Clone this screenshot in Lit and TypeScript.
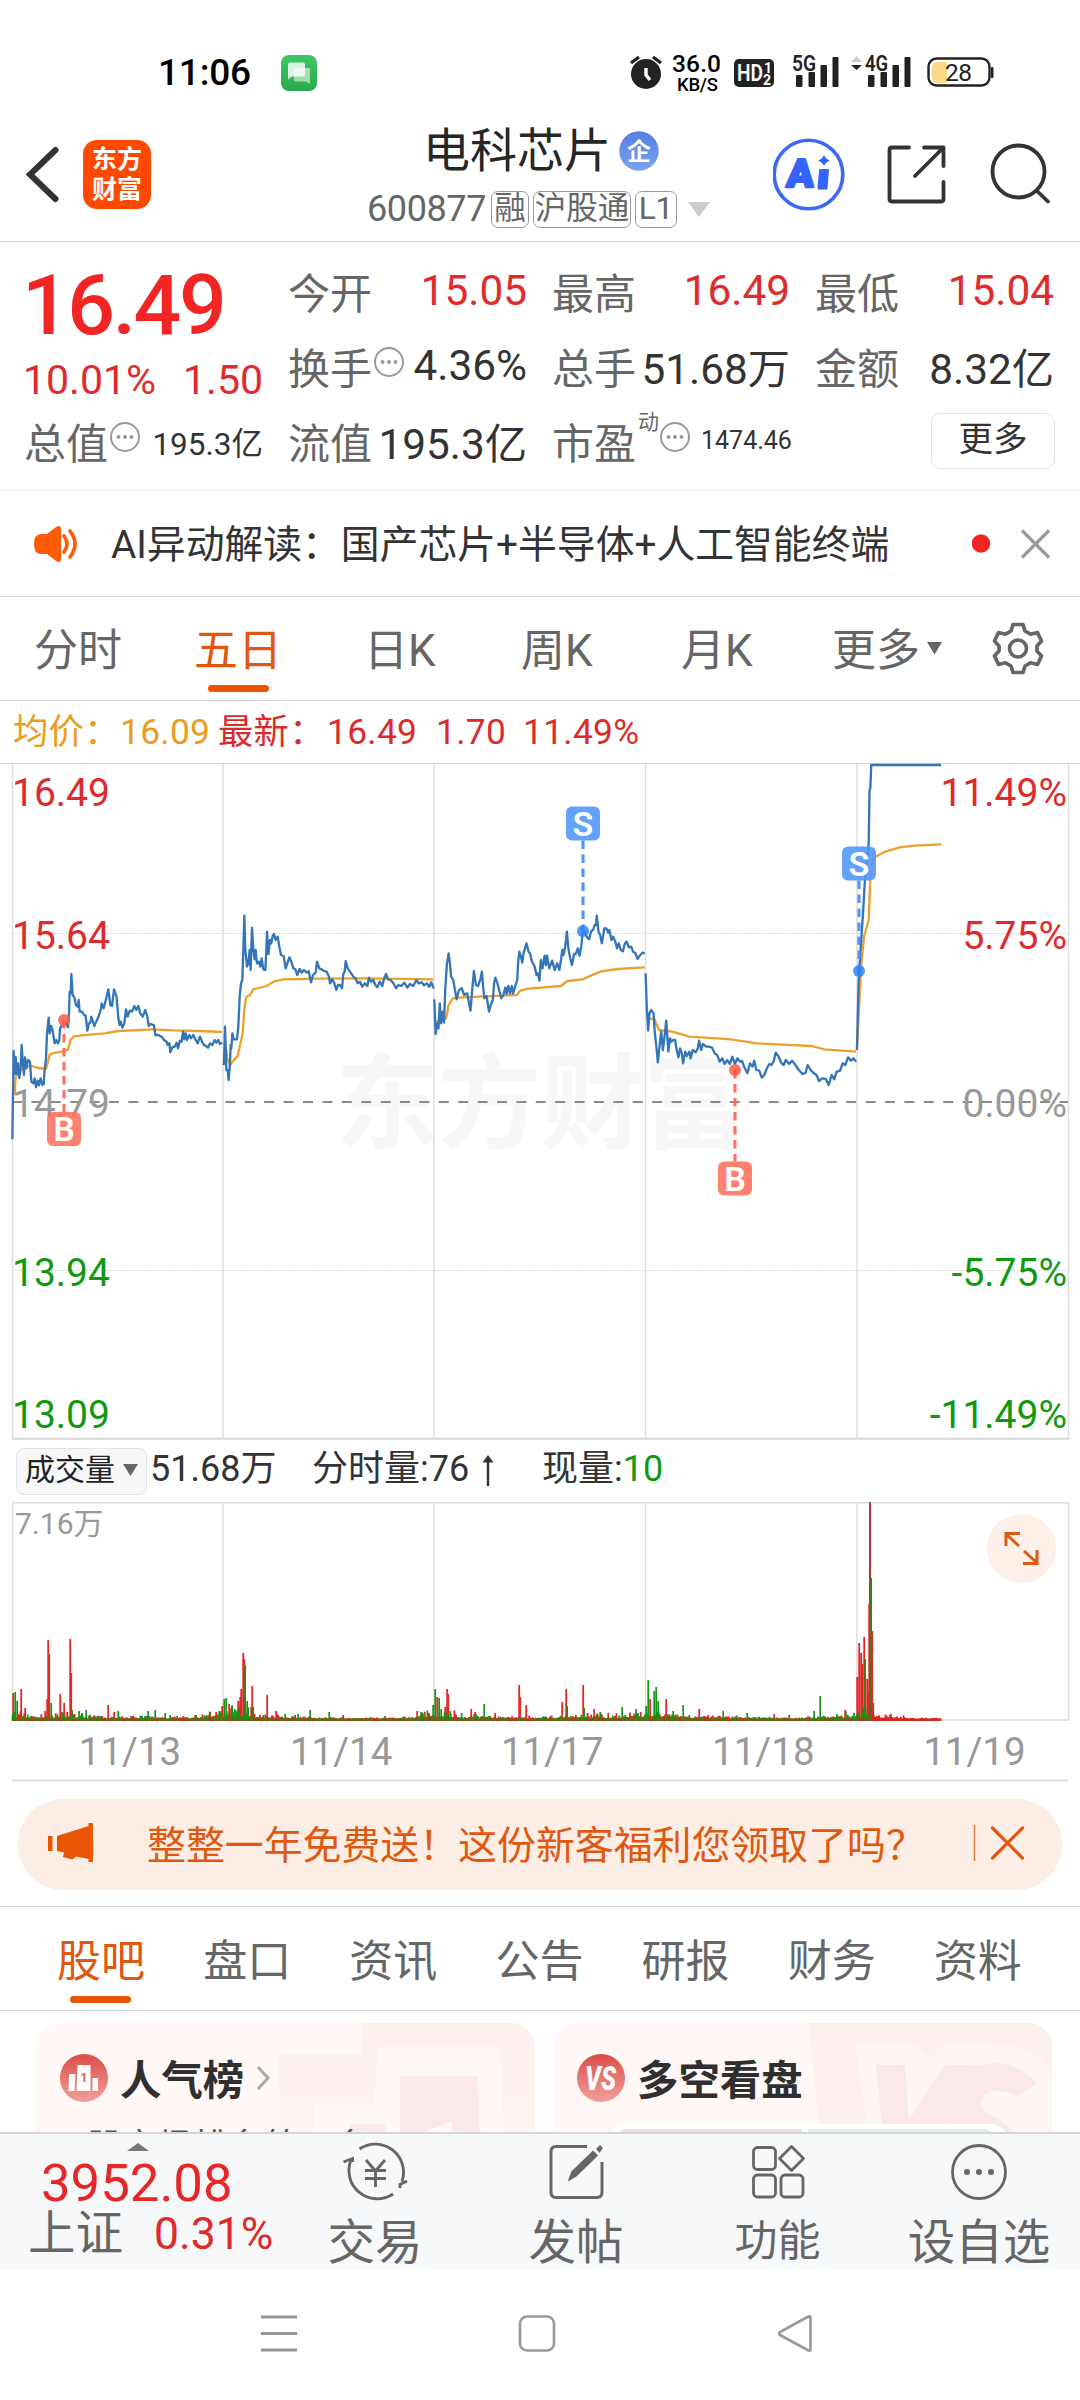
import { LitElement, html, svg, css } from "lit";
import { customElement } from "lit/decorators.js";

type Tone = "r" | "g";

/* Price traces, one per session, on the two drawing scales used by the plot. */
const PRICE_A = [
  "37,1168 38,1100 41,903 44,972 47,921 50,972 54,940 58,984 62,950 65,885 68,935 72,975 75,922 79,955 84,930 90,935 94,995 100,1000 104,985 108,1012 113,992 117,1006 122,985 127,1005 131,1003 134,960 138,925 141,850 146,803 149,850 153,828 157,838 160,855 164,880 169,870 174,880 178,870 180,835 187,825 192,812 198,820 204,832 207,790 209,725 212,730 214,672 218,735 223,742 228,765 233,770 236,750 239,785 246,785 252,795 257,797 262,842 267,820 271,818 274,800 278,812 283,828 290,812 295,802 302,780 305,760 311,775 317,752 325,718 331,765 336,768 342,718 347,732 350,742 355,805 359,825 362,815 367,833 373,820 378,778 383,800 389,782 396,785 403,768 409,780 415,768 421,790 428,800 436,780 442,800 446,828 452,822 462,826 466,855 475,855 485,860 492,870 500,875 503,885 508,880 511,907 517,892 524,890 530,878 534,895 540,872 545,875 549,845 553,868 557,850 561,870 568,855 573,865 580,855 586,868 593,880 600,860 606,875 612,885 618,888 624,893 630,880 637,885 644,870 649,878 655,870 660,882 666,878",
  "670,945 672,940 675,830 679,960 683,960 686,990 690,940 692,885 694,895 697,850 701,868 711,868 715,830 719,740 723,700 727,690 730,600 733,497 736,600 741,650 745,640 749,600 752,660 756,533 760,600 764,628 767,600 771,640 777,635 781,650 785,625 790,658 796,660 799,600 801,545 805,612 810,570 814,580 818,558 822,552 827,570 833,560 838,590 843,615 851,618 857,655 862,640 868,622 874,635 880,655 886,658 892,675 899,657 905,668 912,660 920,668 926,664 933,697 939,675 947,668 951,635 958,655 965,658 972,663 980,665 987,680 990,700 997,688 1003,700 1009,720 1014,705 1020,705 1026,715 1030,672 1034,665 1037,633 1043,655 1052,668 1060,680 1068,688 1073,700 1080,695 1087,710 1094,700 1102,708 1107,683 1113,695 1120,690 1126,705 1132,712 1139,695 1147,708 1151,690 1158,672 1164,688 1172,690 1180,700 1188,715 1195,705 1204,708 1213,698 1222,713 1230,702 1240,708 1249,690 1256,700 1265,697 1272,706 1280,700 1288,710 1294,697 1301,715",
];
const AVG_A = [
  "44,1035 47,980 60,965 75,950 95,948 115,954 138,957 144,935 148,915 156,910 190,904 205,898 211,870 220,860 245,856 315,850 355,843 460,838 520,841 600,843 666,846",
  "675,870 682,925 690,945 700,932 712,920 718,895 728,850 733,780 738,742 750,735 760,718 800,708 820,695 850,688 950,686 1100,685 1300,688",
];
const PRICE_B = [
  "34,748 37,852 41,820 44,835 47,760 50,820 54,785 57,818 60,720 64,640 68,610 71,640 74,680 79,690 83,720 87,748 92,722 99,714 105,735 112,730 120,782 124,720 128,663 133,705 138,708 144,685 147,665 150,710 153,745 158,738 164,785 168,765 173,750 176,700 179,683 184,700 188,720 193,745 198,735 203,712 206,732 210,708 214,730 218,708 221,730 226,710 231,690 233,640 236,605 240,620 243,638 246,610 253,580 258,605 262,612 266,635 272,648 277,675 280,670 284,692 287,630 291,655 296,617 299,645 302,617 307,655 314,632 320,660 326,640 331,660 335,630 338,600 341,615 345,590 349,545 353,600 357,625 361,645 366,612 370,612 375,595 379,617 383,590 386,550 391,545 396,560 402,568 406,545 411,540 415,525 418,525 420,497 424,545 428,555 432,580 438,535 443,535 447,548 450,540 455,570 459,560 464,575 468,595 472,580 477,600 482,604 487,580 491,575 496,592 502,590 506,605 511,608 517,627 523,615 529,608 534,610",
  "536,670 539,780 542,842 545,790 549,780 555,790 558,850 562,895 565,937 569,890 573,845 577,900 580,870 585,812 590,905 594,865 597,875 602,870 606,870 610,900 614,922 618,895 622,910 625,940 630,905 634,918 640,905 643,925 648,900 655,907 660,895 663,872 668,900 672,882 680,890 686,890 694,893 700,910 706,915 712,935 718,925 724,942 730,930 736,942 742,920 748,942 754,925 760,935 765,933 770,950 778,970 784,940 790,950 794,932 799,960 806,962 812,983 818,975 824,955 830,942 835,945 840,935 845,908 852,920 859,940 864,945 869,930 877,942 884,932 892,945 900,960 909,972 916,968 921,945 928,960 936,970 942,975 948,993 956,985 964,987 971,1005 978,975 984,988 990,965 998,962 1004,940 1010,945 1017,922 1024,932 1030,925 1036,935",
  "1038,900 1042,700 1046,610 1052,500 1057,390 1062,340 1066,280 1068,120 1070,115 1072,45 1238,45",
];
const AVG_B = [
  "38,815 62,805 68,765 78,745 100,742 230,735 238,722 258,716 335,708 350,693 387,688 400,680 430,664 470,657 534,652",
  "545,805 557,808 568,840 600,845 640,860 740,868 800,880 930,888 960,898 1036,905",
  "1038,900 1048,650 1055,560 1066,510 1070,380 1075,330 1085,318 1105,305 1140,292 1175,287 1238,283",
];

/* Volume peaks: x, height, tone. */
const PEAKS =
  "13 28 r,15 29 g,17 20 g,21 32 r,25 13 r,45 10 r,47 22 r,48 81 r,49 67 r,51 18 g,60 27 r,64 18 r,67 9 r,70 82 r,71 48 r,72 11 g,79 10 g,82 8 g,86 11 g,102 5 r,108 16 r,114 9 r,118 10 g,131 5 r,148 10 g,155 11 g,165 8 g,170 6 g,210 9 r,216 9 r,219 10 g,222 15 r,224 22 g,226 23 g,229 17 r,232 14 r,238 20 r,240 24 r,241 32 r,243 68 r,244 62 r,245 56 g,247 20 g,251 14 r,252 35 r,253 14 g,267 26 r,276 10 r,285 7 g,298 7 g,310 11 g,329 9 g,343 6 r,385 5 r,417 10 r,421 9 g,428 8 r,433 16 g,435 32 g,437 24 r,439 23 g,441 12 g,445 14 r,447 32 r,448 27 r,450 10 g,471 12 r,475 9 r,484 17 g,495 8 r,519 36 r,520 24 r,526 16 r,562 19 r,566 32 r,567 15 g,583 36 r,584 13 g,594 12 r,600 9 g,622 14 g,636 12 g,646 15 g,648 41 g,650 22 r,654 30 g,656 34 g,658 20 g,666 22 r,673 10 g,683 16 g,699 12 r,723 10 g,747 8 g,774 7 r,789 6 r,814 10 g,820 25 g,845 11 r,857 44 r,859 78 r,861 68 r,862 57 r,864 84 r,865 62 g,867 42 r,868 30 r,869 117 r,870 217 r,871 143 g,872 90 r,873 18 r";

/* Typical height of the small bars as the sessions go by: x, height. */
const ENVELOPE: [number, number][] = [
  [12, 14], [30, 7], [45, 7], [70, 9], [95, 5], [140, 5], [190, 4], [212, 10], [225, 15],
  [235, 19], [250, 15], [262, 8], [300, 5], [345, 2], [410, 4], [425, 11], [445, 16],
  [460, 8], [475, 9], [500, 4], [540, 4], [570, 6], [595, 9], [640, 9], [655, 19],
  [672, 11], [700, 5], [750, 5], [800, 2], [835, 8], [855, 12], [870, 22], [878, 9],
  [895, 6], [915, 2], [942, 2],
];

function envelopeAt(x: number): number {
  for (let i = 1; i < ENVELOPE.length; i++) {
    const [x0, h0] = ENVELOPE[i - 1];
    const [x1, h1] = ENVELOPE[i];
    if (x <= x1) return h0 + ((h1 - h0) * (x - x0)) / (x1 - x0);
  }
  return 2;
}

function volumePaths(): Record<Tone, string> {
  const out: Record<Tone, string> = { r: "", g: "" };
  let seed = 7;
  const rnd = () => (seed = (seed * 16807) % 2147483647) / 2147483647;
  for (let x = 12.5; x < 941; x += 0.9) {
    const tone: Tone = x > 872 || rnd() > 0.5 ? "r" : "g";
    const h = 2 + envelopeAt(x) * (0.1 + 0.75 * rnd() * rnd());
    out[tone] += `M${x.toFixed(1)} 219v-${h.toFixed(1)}`;
  }
  for (const p of PEAKS.split(",")) {
    const [x, h, t] = p.split(" ");
    out[t as Tone] += `M${+x + 0.2} 219v-${h}`;
  }
  return out;
}
const VOLUME = volumePaths();

const COLS = [12.5, 223, 434, 645.5, 857, 1068.5];

interface Mark { x: number; dot: number; box: number; kind: "B" | "S"; }
const MARKS: Mark[] = [
  { x: 64, dot: 1020, box: 1112, kind: "B" },
  { x: 583, dot: 931, box: 806.5, kind: "S" },
  { x: 859, dot: 971, box: 846.5, kind: "S" },
  { x: 735, dot: 1070, box: 1161.5, kind: "B" },
];

const more = () => html`<svg class="more" width="32" height="32" viewBox="0 0 32 32">
  <circle cx="16" cy="16" r="14" fill="none" stroke="#999" stroke-width="2"/>
  <g fill="#999"><circle cx="9.5" cy="16" r="2"/><circle cx="16" cy="16" r="2"/><circle cx="22.5" cy="16" r="2"/></g>
</svg>`;

@customElement("price-plot")
export class PricePlot extends LitElement {
  static styles = css`
    :host { display: block; }
    svg { display: block; }
    text { font-family: Roboto, "Noto Sans CJK SC", sans-serif; }
    .axis { font-size: 39px; }
    .up { fill: #de2a2a; }
    .flat { fill: #999; }
    .down { fill: #0f990f; }
    .price { fill: none; stroke: #3474b9; stroke-width: 2.3; stroke-linejoin: round; }
    .avg { fill: none; stroke: #eda02c; stroke-width: 2.3; stroke-linejoin: round; }
    .price polyline, .avg polyline { vector-effect: non-scaling-stroke; }
    .water { font-family: "Noto Sans CJK SC", sans-serif; font-weight: 700; font-size: 104px; fill: #f7f7f7; }
    .tag { font-size: 34px; font-weight: 600; fill: #fff; }
  `;

  private mark(m: Mark) {
    const buy = m.kind === "B";
    const tone = buy ? "#ff6f5c" : "#4d95fb";
    const from = buy ? m.dot : m.box + 34;
    const to = buy ? m.box : m.dot;
    return svg`<g>
      <line x1=${m.x} x2=${m.x} y1=${from} y2=${to} stroke=${tone} stroke-width="3.1" stroke-dasharray="8.5 5.5"/>
      <circle cx=${m.x} cy=${m.dot} r="6" fill=${buy ? "#ff5a48" : "#2d83fa"} opacity=".85"/>
      <rect x=${m.x - 17} y=${m.box} width="34" height="34" rx="6" fill=${tone} opacity=".88"/>
      <text class="tag" x=${m.x} y=${m.box + 29} text-anchor="middle">${m.kind}</text>
    </g>`;
  }

  render() {
    const left: [string, number, string][] = [
      ["16.49", 806, "up"], ["15.64", 949, "up"], ["14.79", 1117, "flat"], ["13.94", 1286, "down"], ["13.09", 1428, "down"],
    ];
    const right: [string, number, string][] = [
      ["11.49%", 806, "up"], ["5.75%", 949, "up"], ["0.00%", 1117, "flat"], ["-5.75%", 1286, "down"], ["-11.49%", 1428, "down"],
    ];
    const lines = (list: string[]) => list.map((p) => svg`<polyline points=${p}/>`);
    return html`<svg width="1080" height="677" viewBox="0 763 1080 677">
      <text class="water" x="335" y="1141" textLength="412">东方财富</text>
      <path d="M0 763.5H1080" stroke="#d6d6d6"/>
      <path d="M12 933.5H1068M12 1270.5H1068" stroke="#cfcfcf" stroke-dasharray="1.5 1.5"/>
      <path d="M12 1438.7H1069" stroke="#d8d8d8" stroke-width="2"/>
      ${COLS.map((x) => svg`<path d="M${x} 764V1438" stroke="#dcdcdc" stroke-width="1.4"/>`)}
      <path d="M12 1102H1068" stroke="#8a8a8a" stroke-width="2" stroke-dasharray="10 9.4"/>
      ${left.map(([t, y, c]) => svg`<text class="axis ${c}" x="12" y=${y}>${t}</text>`)}
      ${right.map(([t, y, c]) => svg`<text class="axis ${c}" x="1067" y=${y} text-anchor="end">${t}</text>`)}
      <g transform="translate(0 750) scale(.33333)">
        <g class="avg">${lines(AVG_A)}</g><g class="price">${lines(PRICE_A)}</g>
      </g>
      <g transform="translate(420 750) scale(.42092 .33333)">
        <g class="avg">${lines(AVG_B)}</g><g class="price">${lines(PRICE_B)}</g>
      </g>
      ${MARKS.map((m) => this.mark(m))}
    </svg>`;
  }
}

@customElement("volume-plot")
export class VolumePlot extends LitElement {
  static styles = css`
    :host { display: block; }
    svg { display: block; }
    text { font-family: Roboto, "Noto Sans CJK SC", sans-serif; fill: #999; }
    .cap { font-size: 30px; }
    .day { font-size: 38.5px; }
  `;
  render() {
    const days = ["11/13", "11/14", "11/17", "11/18", "11/19"];
    return html`<svg width="1080" height="280" viewBox="0 0 1080 280">
      <path d="M12 .7H1069M12 218H1069" stroke="#dcdcdc" stroke-width="1.4"/>
      ${COLS.map((x) => svg`<path d="M${x} 0V218" stroke="#dcdcdc" stroke-width="1.4"/>`)}
      <path d=${VOLUME.r} stroke="#e82424" stroke-width="1.8"/>
      <path d=${VOLUME.g} stroke="#149314" stroke-width="1.7"/>
      <path d="M12 217.8H858" stroke="#8c5218" stroke-width="2"/>
      <path d="M858 217.8H941" stroke="#c03020" stroke-width="2"/>
      <path d="M870 219V0" stroke="#b03a34" stroke-width="1.9"/>
      <path d="M871.2 219V76" stroke="#149314" stroke-width="1.6"/>
      <text class="cap" x="15" y="31.5">7.16万</text>
      <circle cx="1021.5" cy="46.5" r="34.5" fill="#fef0e9"/>
      <g fill="none" stroke="#dd5a12" stroke-width="3">
        <path d="M1006 44V31.5H1020M1007 33L1019 44M1037 48V61.5H1023M1036 60L1024 49"/>
      </g>
      ${days.map((d, i) => svg`<text class="day" x=${130 + i * 211.1} y="263" text-anchor="middle">${d}</text>`)}
      <path d="M12 278.5H1068" stroke="#e2e2e2" stroke-width="2"/>
    </svg>`;
  }
}

@customElement("app-root")
export class AppRoot extends LitElement {
  static styles = css`
    :host {
      display: block; width: 1080px; height: 2400px; overflow: hidden; background: #fff; color: #333;
      font-family: Roboto, "Noto Sans CJK SC", sans-serif;
    }
    * { box-sizing: border-box; }
    svg { display: block; flex: none; }
    svg text { font-family: Roboto, "Noto Sans CJK SC", sans-serif; }
    .row { display: flex; align-items: center; white-space: nowrap; }
    .status { height: 95px; padding: 50px 0 0 158px; align-items: flex-start; }
    .clock { font-size: 37px; line-height: 46px; font-weight: 500; color: #000; width: 123px; letter-spacing: -.2px; }
    .chat { margin: 5px 308px 0 0; }
    .head { display: flex; height: 147px; border-bottom: 1.5px solid #d8d8d8; }
    .head-l { display: flex; width: 368px; padding: 45px 0 0 24px; }
    .logo { width: 68px; height: 69px; border-radius: 14px; background: #ff4800; margin-left: 22px; color: #fff;
      font: 700 25px/30px "Noto Sans CJK SC", sans-serif; text-align: center; padding-top: 2px; }
    .head-c { width: 405px; padding-top: 25px; }
    .name { height: 62px; padding-left: 55px; font-size: 47px; line-height: 62px; color: #262626; }
    .corp { margin: 0 0 1px 8px; }
    .code { height: 42px; margin-top: 6px; font-size: 36px; color: #666; }
    .code b { font-weight: 400; width: 124px; letter-spacing: -.4px; margin-left: -1px; }
    .chip { height: 37px; border: 1.6px solid #999; border-radius: 7px; font-size: 31.5px; line-height: 33px; text-align: center; margin-right: 4px; }
    .c1 { width: 38px; } .c3 { width: 98px; } .c2 { width: 42px; }
    .caret { margin-left: 7px; }
    .head-r { display: flex; padding-top: 41px; }
    .quote { display: grid; grid-template-columns: 239px 239px 238px 239px; column-gap: 25px; padding: 11px 24px 0; height: 249px; border-bottom: 1.5px solid #ececec; }
    .cell { display: flex; align-items: center; height: 75px; justify-content: space-between; font-size: 42.3px; white-space: nowrap; }
    .cell span { font-size: 42px; color: #666; display: flex; align-items: center; }
    .more { margin: -8px 0 0 1px; }
    .sup { font-style: normal; font-size: 21px; color: #666; line-height: 21px; align-self: flex-start; margin: 2px -1px 0 2px; }
    .red { color: #e02b2b; }
    .price { height: 100px; line-height: 106px; font-size: 84px; font-weight: 500; color: #f22424; margin-left: -2px; letter-spacing: -2.4px; }
    .chg { display: flex; justify-content: space-between; height: 50px; line-height: 54px; font-size: 41px; color: #de2c2c; margin-left: -1px; }
    .s31 { font-size: 31.5px; } .s25 { font-size: 25px; }
    .cell.pe { justify-content: flex-start; } .pe .s25 { margin-left: 10px; }
    .btn { width: 124px; height: 56px; border: 1.6px solid #e4e4e4; border-radius: 9px; font-size: 34.5px; line-height: 50px; text-align: center; margin: 10px -1px 0 auto; }
    .ai { height: 106px; border-bottom: 1.5px solid #d8d8d8; padding-left: 33px; font-size: 38.8px; }
    .ai p { margin: -5px 0 0 32px; width: 861px; }
    .tabs { height: 104px; border-bottom: 1.5px solid #d6d6d6; font-size: 44px; color: #666; padding-left: 34px; }
    .tabs div { line-height: 108px; height: 104px; }
    .on { color: #e0570f; position: relative; }
    .on::after { content: ""; position: absolute; left: 50%; margin-left: -30px; bottom: 9px; width: 61px; height: 7px; border-radius: 4px; background: #ea5504; }
    .t1 { width: 160px; } .t2 { width: 88px; margin-right: 82px; } .t3 { width: 157px; } .t4 { width: 160px; } .t5 { width: 151px; } .t6 { width: 95px; }
    .gear { margin: -1px 0 0 50px; }
    .legend { height: 62px; padding: 0 0 0 13px; font-size: 35.3px; color: #dc2a2a; letter-spacing: .3px; }
    .legend div { line-height: 64px; }
    .gold { color: #eb9c1c; } .l1 { width: 107px; } .l2 { width: 98px; } .l3 { width: 109px; } .l4 { width: 109px; } .l5 { width: 87px; }
    .volhead { height: 62px; padding: 0 0 0 16px; font-size: 36px; }
    .volhead div { line-height: 40px; }
    .volhead > div:not(.pick) { margin-top: -4px; }
    .pick { width: 131px; height: 47px; background: #f7f8fa; border: 1.5px solid #e3e4e8; border-radius: 8px; font-size: 30px; padding: 0 0 3px 8px; gap: 8px; color: #222; }
    .v1 { width: 165px; padding-left: 3px; } .v2 { width: 164px; } .arrow { margin: 0 48px 0 6px; } .green { color: #0f990f; }
    .promo { margin: 17px 18px 16px; height: 91px; border-radius: 46px; background: #fceee5; padding-left: 29px; color: #e0570f; font-size: 38.9px; }
    .promo p { margin: -5px 0 0 53px; width: 826px; }
    .promo svg { margin-top: -3px; }
    .sections { height: 105px; border-top: 1.5px solid #d6d6d6; border-bottom: 1.5px solid #d6d6d6; padding-left: 57px; font-size: 44px; color: #666; }
    .sections div { width: 146.3px; line-height: 108px; height: 102px; }
    .sections .on::after { left: 13px; margin: 0; bottom: 7px; }
    .cards { display: grid; grid-template-columns: 499px 499px; column-gap: 18px; padding: 12px 0 0 36px; height: 121px; overflow: hidden; }
    .card { position: relative; height: 160px; border-radius: 24px; background: #fff8f6; overflow: hidden; padding: 26px 0 0 23px; }
    .art { position: absolute; left: 0; top: 0; }
    .card .row { position: relative; font: 700 41.4px/52px "Noto Sans CJK SC", sans-serif; gap: 11px; color: #2f2f2f; height: 56px; padding-bottom: 1px; }
    .card .row svg { margin-top: 2px; }
    .card .sub { position: relative; margin: 17px 0 0 28px; font-size: 35.5px; line-height: 50px; color: #555; white-space: pre; }
    .dock { height: 137px; background: #f7f8fa; border-top: 2px solid #d2d6da; display: grid; grid-template-columns: 275px 201px 201px 202px 201px; color: #666; font-size: 47.5px; }
    .idx { padding: 9px 0 0 28px; }
    .idx .tri { margin-left: 99px; }
    .pts { font-size: 52.7px; line-height: 56px; color: #e52727; padding-left: 13px; margin-top: 4px; }
    .idx .row { font-size: 47.5px; line-height: 50px; margin-top: -2px; }
    .idx .row b { font-weight: 400; font-size: 44.5px; color: #de2a2a; margin-left: 31px; }
    .act { display: flex; flex-direction: column; align-items: center; padding-top: 8px; margin-left: -1px; }
    .act div { line-height: 60px; margin-top: 11px; }
    .act .sm { font-size: 43px; margin-top: 9px; }
    .nav { height: 131px; padding: 0 0 3px 259px; }
    .nav svg + svg { margin-left: 218px; }
  `;

  private header() {
    return html`
    <div class="status row">
      <div class="clock">11:06</div>
      <svg class="chat" width="36" height="36" viewBox="0 0 36 36">
        <defs><linearGradient id="cg" x2="0" y2="1"><stop stop-color="#3fc765"/><stop offset="1" stop-color="#2aa94b"/></linearGradient></defs>
        <rect width="36" height="36" rx="8" fill="url(#cg)"/>
        <path d="M13 13h15q1 0 1 1v15l-4-2.5H15q-2 0-2-2z" fill="#fff" opacity=".55"/>
        <path d="M9 7.500h13q2 0 2 2v10q0 2-2 2H11l-4 3v-15q0-2 2-2z" fill="#fff" opacity=".82"/>
      </svg>
      <svg width="366" height="44" viewBox="625 50 366 44">
        <g fill="#222">
          <circle cx="646" cy="74" r="15"/><path d="M631 63l8-6M661 63l-8-6" stroke="#222" stroke-width="3.400"/>
          <path d="M646 68v7l4 5" stroke="#fff" stroke-width="3.400" fill="none"/>
          <rect x="734" y="59" width="40" height="28" rx="5"/>
          <rect x="796" y="75" width="6.500" height="12" rx="1"/><rect x="808.500" y="72" width="6.500" height="15" rx="1"/><rect x="820.500" y="65" width="6.500" height="22" rx="1"/><rect x="832.500" y="57" width="6" height="30" rx="1"/>
          <rect x="868" y="75" width="6.500" height="12" rx="1"/><rect x="880.500" y="72" width="6.500" height="15" rx="1"/><rect x="892.500" y="65" width="6.500" height="22" rx="1"/><rect x="904.500" y="57" width="6" height="30" rx="1"/>
          <path d="M851 65h11l-5.500 5z"/><path d="M851 62h11l-5.500-6z" fill="#ccc"/>
        </g>
        <text x="672" y="72" font-size="24.500" font-weight="500" fill="#000" textLength="49">36.0</text>
        <text x="677" y="90.500" font-size="18.500" font-weight="500" fill="#000" textLength="41">KB/S</text>
        <text x="737" y="81" font-size="23" font-weight="600" fill="#fff" textLength="26" lengthAdjust="spacingAndGlyphs">HD</text>
        <text x="764" y="73" font-size="14" font-weight="700" fill="#fff">1</text><text x="763" y="84.500" font-size="14" font-weight="700" fill="#fff">2</text>
        <text x="792" y="70.500" font-size="21.500" font-weight="600" fill="#222" textLength="24" lengthAdjust="spacingAndGlyphs">5G</text>
        <text x="865" y="70.500" font-size="21.500" font-weight="600" fill="#222" textLength="23" lengthAdjust="spacingAndGlyphs">4G</text>
        <path d="M938 62h9v21h-9q-6 0-6-6v-9q0-6 6-6z" fill="#fdd98a"/>
        <rect x="928.500" y="58.500" width="61" height="27" rx="8" fill="none" stroke="#222" stroke-width="2.400"/>
        <text x="945" y="81" font-size="24.500" fill="#222" textLength="27">28</text>
      </svg>
      <svg width="4" height="12" style="margin-top:17px"><rect width="2.500" height="11" rx="1" fill="#222"/></svg>
    </div>
    <div class="head">
      <div class="head-l">
        <svg width="37" height="68" viewBox="24 140 37 68"><path d="M55.500 150L30 174.500L55.500 199" fill="none" stroke="#333" stroke-width="6" stroke-linecap="round"/></svg>
        <div class="logo">东方<br>财富</div>
      </div>
      <div class="head-c">
        <div class="name row">电科芯片
          <svg class="corp" width="40" height="40" viewBox="0 0 40 40"><defs><linearGradient id="qg" x2="0" y2="1"><stop stop-color="#557fe6"/><stop offset="1" stop-color="#7ba4ec"/></linearGradient></defs>
            <circle cx="20" cy="20" r="19.700" fill="url(#qg)"/><text x="20" y="29" font-size="24" font-weight="700" fill="#fff" text-anchor="middle">企</text></svg>
        </div>
        <div class="code row"><b>600877</b><div class="chip c1">融</div><div class="chip c3">沪股通</div><div class="chip c2">L1</div>
          <svg class="caret" width="22" height="15"><path d="M0 0h22L11 15z" fill="#ccc"/></svg></div>
      </div>
      <div class="head-r">
        <svg width="307" height="76" viewBox="773 136 307 76">
          <circle cx="808.500" cy="174.500" r="34.300" fill="none" stroke="#3c68f3" stroke-width="3.600"/>
          <g font-weight="900" fill="#3563fb" stroke="#3563fb"><text x="786" y="187" font-size="39" stroke-width="2.500" stroke-linejoin="round" textLength="27" lengthAdjust="spacingAndGlyphs" transform="skewX(-4) translate(13 0)">A</text></g>
          <path d="M820 169h8q1 0 1 1l-1.500 18q0 1.500-1.500 1.500h-7q-1.500 0-1.500-1.500l1.500-17.500q0-1.500 1-1.500zM824 155q1.500 4 6 5.500q-4.500 1.500-6 5.500q-1.500-4-6-5.500q4.500-1.500 6-5.500z" fill="#3563fb"/>
          <g fill="none" stroke="#333" stroke-width="3.800" stroke-linecap="round" stroke-linejoin="round">
            <path d="M909 147.500H892q-2.500 0-2.500 2.500V199q0 2.500 2.500 2.500H941q2.500 0 2.500-2.500V182M924 147.500H943.500V166M942 149L915 176"/>
            <ellipse cx="1018.500" cy="171.500" rx="26" ry="26"/><path d="M1037 191L1048 201.500"/>
          </g>
        </svg>
      </div>
    </div>`;
  }

  private quote() {
    return html`
    <div class="quote">
      <div><div class="price">16.49</div><div class="chg"><div>10.01%</div><div>1.50</div></div>
        <div class="cell"><span>总值${more()}</span><div class="s31">195.3亿</div></div></div>
      <div><div class="cell"><span>今开</span><div class="red">15.05</div></div>
        <div class="cell"><span>换手${more()}</span><div>4.36%</div></div>
        <div class="cell"><span>流值</span><div>195.3亿</div></div></div>
      <div><div class="cell"><span>最高</span><div class="red">16.49</div></div>
        <div class="cell"><span>总手</span><div>51.68万</div></div>
        <div class="cell pe"><span>市盈<i class="sup">动</i>${more()}</span><div class="s25">1474.46</div></div></div>
      <div><div class="cell"><span>最低</span><div class="red">15.04</div></div>
        <div class="cell"><span>金额</span><div>8.32亿</div></div>
        <div class="btn">更多</div></div>
    </div>
    <div class="ai row">
      <svg width="46" height="38" viewBox="33 525 46 38">
        <path d="M41 534h6l9-7q5-2.500 5 2v30q0 4.500-5 2l-9-7h-6q-7 0-7-10t7-10z" fill="#ff5a05"/>
        <path d="M64 536q6 8 0 16M70 531q10 13 0 26" fill="none" stroke="#ff5a05" stroke-width="3.600" stroke-linecap="round"/>
      </svg>
      <p>AI异动解读：国产芯片+半导体+人工智能终端</p>
      <svg width="90" height="32" viewBox="970 528 90 32"><circle cx="979" cy="543.500" r="9.300" fill="#f22424"/>
        <path d="M1020 530.500L1047 557.500M1047 530.500L1020 557.500" stroke="#999" stroke-width="3.200"/></svg>
    </div>`;
  }

  private chart() {
    return html`
    <div class="tabs row">
      <div class="t1">分时</div><div class="t2 on">五日</div><div class="t3">日K</div><div class="t4">周K</div><div class="t5">月K</div><div class="t6">更多</div>
      <svg width="15" height="13"><path d="M0 0h15L7.500 12.500z" fill="#666"/></svg>
      <svg class="gear" width="52" height="54" viewBox="0 0 52 54" fill="none" stroke="#666" stroke-width="3.700" stroke-linejoin="round">
        <path d="M21 3.500h10l2 6.500l5.500 3.200l7-1.700l4 8.500l-4.500 5v5l4.500 5l-4 8.500l-7-1.700l-5.500 3.200l-2 6.500h-10l-2-6.500l-5.500-3.200l-7 1.700l-4-8.500l4.500-5v-5l-4.500-5l4-8.500l7 1.700l5.500-3.200z"/>
        <circle cx="26" cy="27.500" r="8.500"/>
      </svg>
    </div>
    <div class="legend row"><div class="gold l1">均价：</div><div class="gold l2">16.09</div><div class="l3">最新：</div><div class="l4">16.49</div><div class="l5">1.70</div><div>11.49%</div></div>
    <price-plot></price-plot>
    <div class="volhead row">
      <div class="pick row">成交量<svg width="15" height="12"><path d="M0 0h15L7.500 12z" fill="#666"/></svg></div>
      <div class="v1">51.68万</div><div class="v2">分时量:76</div>
      <svg class="arrow" width="12" height="32"><path d="M6 31V3" stroke="#333" stroke-width="2.500"/><path d="M0.500 7.500L6 0l5.500 7.500z" fill="#333"/></svg>
      <div>现量:<span class="green">10</span></div>
    </div>
    <volume-plot></volume-plot>
    <div class="promo row">
      <svg width="47" height="40" viewBox="47 1824 47 40" fill="#ea5504"><path d="M48 1837h4.500v15H48zM57 1837L88.500 1827V1824H93V1863H88.500V1860L76 1857.500L72.500 1860.500L63 1858L64 1853.500L57 1852z"/></svg>
      <p>整整一年免费送！这份新客福利您领取了吗？</p>
      <svg width="54" height="38" viewBox="973 1825 54 38"><path d="M974.500 1826V1862" stroke="#dd7a45" stroke-width="1.500"/><path d="M992.500 1829L1022.500 1859M1022.500 1829L992.500 1859" stroke="#e0570f" stroke-width="3.200" stroke-linecap="round"/></svg>
    </div>`;
  }

  private cards() {
    return html`
    <div class="sections row"><div class="on">股吧</div><div>盘口</div><div>资讯</div><div>公告</div><div>研报</div><div>财务</div><div>资料</div></div>
    <div class="cards">
      <div class="card">
        <svg class="art" width="499" height="160" viewBox="36 2023 499 160">
          <defs><linearGradient id="w1" x2="0" y2="1"><stop stop-color="#fdf1ef"/><stop offset="1" stop-color="#fef5f3"/></linearGradient></defs>
          <path d="M363 2023H535V2183H506L500 2047H378L374 2105H314V2183H279V2054H361z" fill="url(#w1)"/>
          <path d="M400 2076H477L482 2183H400z" fill="#fbe9e9"/><path d="M350 2124H385V2183H350z" fill="#fbe9e9"/>
          <path d="M420 2134L452 2121V2183H420z" fill="#fff8f6"/>
        </svg>
        <div class="row">
          <svg width="50" height="50" viewBox="0 0 50 50"><defs><linearGradient id="rg" x2="0" y2="1"><stop stop-color="#dc4c48"/><stop offset="1" stop-color="#f0a09c"/></linearGradient></defs>
            <circle cx="25" cy="25" r="24" fill="url(#rg)"/><path d="M10 21h6.500l-1 17H9.500zM18.500 12h13v26h-14zM33.500 25h5.500v13h-5.500z" fill="#fff"/>
            <text x="25" y="29" font-size="13" font-weight="700" fill="#df5f5b" text-anchor="middle">1</text></svg>
          人气榜<svg width="16" height="26"><path d="M3 2l10 11L3 24" fill="none" stroke="#aaa" stroke-width="3"/></svg>
        </div>
        <div class="sub">股市场排名第    名</div>
      </div>
      <div class="card">
        <svg class="art" width="499" height="160" viewBox="553 2023 499 160">
          <path d="M809 2023H1052V2183H825z" fill="#fdf0ee"/>
          <path d="M855 2044H915L930 2058L945 2044H990Q1060 2046 1052 2100V2183H875z" fill="#fef6f4"/>
          <path d="M876 2065H905L909 2120L945 2065H975L922 2183H888z" fill="#fbe9e9"/>
          <path d="M1037 2083Q1012 2056 975 2066Q945 2076 944 2104Q944 2124 963 2134V2183H1035Q1030 2135 990 2115Q975 2105 985 2094Q1000 2086 1017 2097z" fill="#fbe9e9"/>
          <rect x="606" y="2124" width="404" height="40" rx="20" fill="#fff"/>
          <path d="M624 2129H802V2160H612Q612 2134 624 2129z" fill="#f8dcd9"/><path d="M808 2129H985Q1003 2134 1003 2160H808z" fill="#d9eedd"/>
        </svg>
        <div class="row">
          <svg width="50" height="50" viewBox="0 0 50 50"><defs><linearGradient id="rh" x2="0" y2="1"><stop stop-color="#dc4c48"/><stop offset="1" stop-color="#f0a09c"/></linearGradient></defs>
            <circle cx="25" cy="25" r="24" fill="url(#rh)"/><text x="24.500" y="37" font-size="33" font-weight="900" font-style="italic" fill="#fff" text-anchor="middle" textLength="31" lengthAdjust="spacingAndGlyphs">VS</text></svg>
          多空看盘
        </div>
      </div>
    </div>`;
  }

  private dock() {
    return html`
    <div class="dock">
      <div class="idx"><svg class="tri" width="22" height="8"><path d="M0 8h22L11 0z" fill="#777"/></svg>
        <div class="pts">3952.08</div><div class="row">上证<b>0.31%</b></div></div>
      <div class="act"><svg width="68" height="60" viewBox="341 2142 68 60" fill="none" stroke="#666" stroke-width="2.900">
          <path d="M359.500 2149A28.200 28.200 0 0 1 402 2181.500M393 2194A28.200 28.200 0 0 1 351.500 2159"/>
          <path d="M400 2188V2184.500L407 2181M352.500 2162V2158.500L343.500 2162"/>
          <path d="M366 2160L375.500 2171L385 2160M375.500 2171V2187M365 2170.500H386M365 2178.500H386"/>
        </svg><div>交易</div></div>
      <div class="act"><svg width="58" height="60" viewBox="548 2142 58 60" fill="none" stroke="#666" stroke-width="3">
          <path d="M588 2146.500H557Q552 2146.500 552 2152V2192Q552 2197.500 557 2197.500H598Q603 2197.500 603 2192V2162"/>
          <path d="M570 2180L573 2172L594 2151.500L598 2155.500L577 2176z" fill="#666" stroke-width="1.500"/><path d="M597 2149L601 2145L604 2148L600.500 2153z" fill="#666" stroke="none"/>
        </svg><div>发帖</div></div>
      <div class="act"><svg width="58" height="60" viewBox="749 2142 58 60" fill="none" stroke="#666" stroke-width="2.800" stroke-linejoin="round">
          <rect x="753.500" y="2147.500" width="22" height="22" rx="4"/><rect x="753.500" y="2175" width="22" height="22" rx="4"/><rect x="781" y="2175" width="22" height="22" rx="4"/>
          <path d="M791.500 2146.500L803.500 2158.500L791.500 2170.500L779.500 2158.500z"/>
        </svg><div class="sm">功能</div></div>
      <div class="act"><svg width="60" height="60" viewBox="0 0 60 60"><circle cx="30" cy="30" r="26.500" fill="none" stroke="#666" stroke-width="2.800"/>
          <g fill="#666"><circle cx="18" cy="30" r="3"/><circle cx="30" cy="30" r="3"/><circle cx="42" cy="30" r="3"/></g></svg><div>设自选</div></div>
    </div>
    <div class="nav row">
      <svg width="40" height="40" viewBox="0 0 40 40"><path d="M2 4h36M2 20.500h36M2 37h36" stroke="#959595" stroke-width="2.800"/></svg>
      <svg width="40" height="40" viewBox="0 0 40 40"><rect x="3" y="3.500" width="34" height="34" rx="7" fill="none" stroke="#999" stroke-width="2.600"/></svg>
      <svg width="40" height="40" viewBox="0 0 40 40"><path d="M35.500 4.500v32q0 1.500-2 1L5 22q-1.500-1.500 0-3L33.500 3.500q2-.5 2 1z" fill="none" stroke="#999" stroke-width="2.600" stroke-linejoin="round"/></svg>
    </div>`;
  }

  render() {
    return html`${this.header()}${this.quote()}${this.chart()}${this.cards()}${this.dock()}`;
  }
}
